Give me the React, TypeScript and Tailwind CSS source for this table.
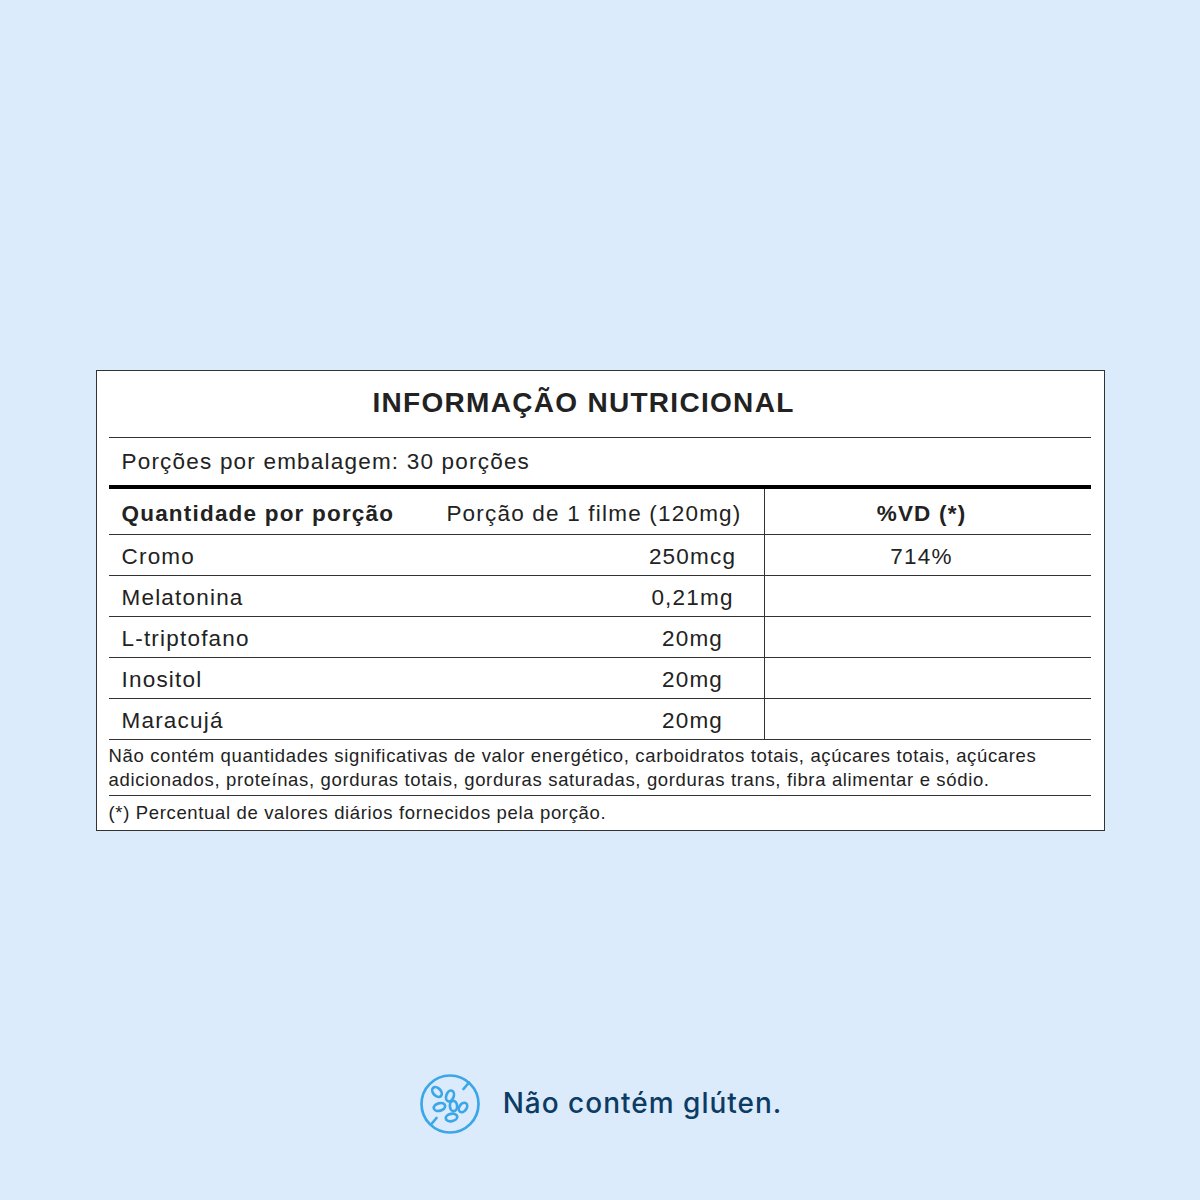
const rows = [
  { name: "Cromo", value: "250mcg", vd: "714%" },
  { name: "Melatonina", value: "0,21mg", vd: "" },
  { name: "L-triptofano", value: "20mg", vd: "" },
  { name: "Inositol", value: "20mg", vd: "" },
  { name: "Maracujá", value: "20mg", vd: "" },
];

function GlutenFreeIcon() {
  return (
    <svg width="64" height="64" viewBox="0 0 64 64" fill="none" stroke="#3ba6e8" strokeWidth="2.7" strokeLinecap="round">
      <circle cx="32" cy="32" r="28.5" />
      <line x1="51" y1="10.5" x2="45.5" y2="17" />
      <line x1="18.5" y1="46" x2="13" y2="52.5" />
      <ellipse cx="19" cy="20" rx="3.8" ry="5.6" transform="rotate(-45 19 20)" />
      <ellipse cx="32" cy="24" rx="3.7" ry="5.6" transform="rotate(20 32 24)" />
      <ellipse cx="21.5" cy="35" rx="5.8" ry="3.7" transform="rotate(-15 21.5 35)" />
      <ellipse cx="35.5" cy="34" rx="3.6" ry="5.2" transform="rotate(-5 35.5 34)" />
      <ellipse cx="45" cy="35.5" rx="3.6" ry="5.2" transform="rotate(35 45 35.5)" />
      <ellipse cx="33.5" cy="45.5" rx="5.8" ry="3.7" transform="rotate(-10 33.5 45.5)" />
    </svg>
  );
}

export default function App() {
  return (
    <main className="flex h-[1200px] w-[1200px] flex-col items-center bg-[#dcebfb] font-['Liberation_Sans',Arial,sans-serif] text-[#222]">
      <section className="mt-[370px] w-[1009px] border border-[#333] bg-white pl-[12px] pr-[13px]">
        <h1 className="flex h-[66px] items-center justify-center pb-[2px] pr-[32px] text-[28px] font-bold tracking-[1.3px] text-[#222]">
          INFORMAÇÃO NUTRICIONAL
        </h1>
        <div className="border-t border-[#333]" />
        <div className="flex h-[47px] items-center pl-[13px] text-[22.5px] tracking-[1.2px]">
          Porções por embalagem: 30 porções
        </div>
        <div className="h-[4px] bg-black" />

        <div className="grid grid-cols-[656px_1fr] text-[22.5px] tracking-[1.2px]">
          <div className="flex h-[46px] items-center justify-between border-b border-r border-[#333] pl-[13px] pr-[22px] pt-[4px]">
            <span className="font-bold">Quantidade por porção</span>
            <span>Porção de 1 filme (120mg)</span>
          </div>
          <div className="flex h-[46px] items-center justify-center border-b border-[#333] pr-[12px] pt-[4px] font-bold">
            %VD (*)
          </div>
          {rows.map((row) => (
            <div key={row.name} className="contents">
              <div className="flex h-[41px] items-center justify-between border-b border-r border-[#333] pl-[13px] pt-[3px]">
                <span>{row.name}</span>
                <span className="w-[142px] text-center">{row.value}</span>
              </div>
              <div className="flex h-[41px] items-center justify-center border-b border-[#333] pr-[12px] pt-[3px]">
                {row.vd}
              </div>
            </div>
          ))}
        </div>

        <p className="border-b border-[#333] pb-[3px] pt-[4px] text-[18.5px] leading-[24px] tracking-[0.65px]">
          Não contém quantidades significativas de valor energético, carboidratos totais, açúcares totais, açúcares
          adicionados, proteínas, gorduras totais, gorduras saturadas, gorduras trans, fibra alimentar e sódio.
        </p>
        <p className="flex h-[34px] items-center text-[18.5px] tracking-[0.65px]">
          (*) Percentual de valores diários fornecidos pela porção.
        </p>
      </section>

      <div className="mt-[241px] flex items-center gap-[21px]">
        <GlutenFreeIcon />
        <span className="pb-[3px] font-['Inter',sans-serif] text-[28px] font-medium tracking-[1px] text-[#0c3b64]">
          Não contém glúten.
        </span>
      </div>
    </main>
  );
}
